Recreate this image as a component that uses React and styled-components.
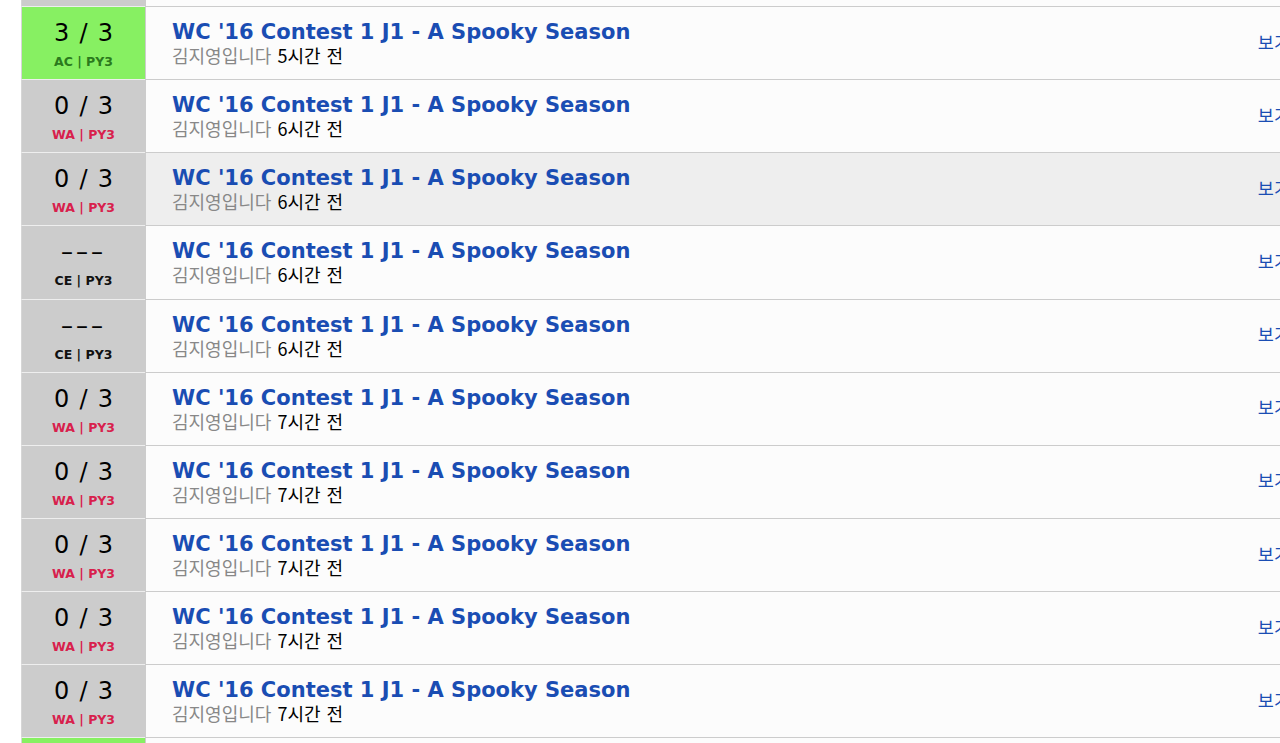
import React from "react";
import styled, { createGlobalStyle } from "styled-components";

const GlobalStyle = createGlobalStyle`
  html, body {
    margin: 0;
    padding: 0;
    background: #ffffff;
    overflow: hidden;
  }
  body {
    font-family: "DejaVu Sans", "Noto Sans CJK KR", sans-serif;
  }
`;

const STATUS = {
  AC: { bg: "#87f062", fg: "#2b7a1d" },
  WA: { bg: "#cccccc", fg: "#d8204c" },
  CE: { bg: "#cccccc", fg: "#111111" },
};

const Page = styled.div`
  padding-left: 21px;
  height: 743px;
  overflow: hidden;
`;

const List = styled.ul`
  list-style: none;
  margin: -66.15px 0 0 0;
  padding: 0;
  width: 1311px;
`;

const Row = styled.li`
  display: flex;
  height: 73.15px;
`;

const Score = styled.div`
  box-sizing: border-box;
  width: 124px;
  flex: none;
  border-left: 1px solid #d6d6d6;
  border-bottom: 1px solid #eeeeee;
  background: ${(p) => STATUS[p.$status].bg};
  display: flex;
  flex-direction: column;
  align-items: center;
  padding-top: 12px;
`;

const Points = styled.div`
  font-family: "DejaVu Sans", sans-serif;
  font-size: 24px;
  line-height: 28px;
  color: #000;
  word-spacing: 2.5px;
  white-space: pre;
  letter-spacing: ${(p) => (p.$dash ? "3px" : "0")};
`;

const State = styled.div`
  font-family: "DejaVu Sans", sans-serif;
  font-weight: 700;
  font-size: 12.5px;
  line-height: 16px;
  margin-top: 7px;
  color: ${(p) => STATUS[p.$status].fg};
`;

const Info = styled.div`
  box-sizing: border-box;
  flex: 1;
  display: flex;
  align-items: center;
  border-left: 1px solid #cccccc;
  border-bottom: 1px solid #cccccc;
  background: ${(p) => (p.$hover ? "#eeeeee" : "#fcfcfc")};
  padding: 0 42px 0 26px;
`;

const Text = styled.div`
  flex: 1;
  align-self: flex-start;
  padding-top: 13px;
`;

const Title = styled.a`
  display: block;
  font-family: "DejaVu Sans", sans-serif;
  font-weight: 700;
  font-size: 21px;
  line-height: 24px;
  color: #1a4db3;
  text-decoration: none;
  white-space: nowrap;
`;

const Meta = styled.div`
  font-family: "Noto Sans CJK KR", sans-serif;
  font-size: 18px;
  line-height: 22px;
  word-spacing: 2px;
  color: #000;
`;

const User = styled.span`
  color: #888888;
`;

const View = styled.a`
  font-family: "Noto Sans CJK KR", sans-serif;
  font-size: 17.5px;
  line-height: 22px;
  margin-bottom: 3px;
  color: #1a4db3;
  text-decoration: none;
  white-space: nowrap;
`;

const rows = [
  { status: "WA", points: "0 / 3", time: "5시간 전" },
  { status: "AC", points: "3 / 3", time: "5시간 전" },
  { status: "WA", points: "0 / 3", time: "6시간 전" },
  { status: "WA", points: "0 / 3", time: "6시간 전", hover: true },
  { status: "CE", points: null, time: "6시간 전" },
  { status: "CE", points: null, time: "6시간 전" },
  { status: "WA", points: "0 / 3", time: "7시간 전" },
  { status: "WA", points: "0 / 3", time: "7시간 전" },
  { status: "WA", points: "0 / 3", time: "7시간 전" },
  { status: "WA", points: "0 / 3", time: "7시간 전" },
  { status: "WA", points: "0 / 3", time: "7시간 전" },
  { status: "AC", points: "3 / 3", time: "8시간 전" },
];

export default function App() {
  return (
    <>
      <GlobalStyle />
      <Page>
        <List>
          {rows.map((r, i) => (
            <Row key={i}>
              <Score $status={r.status}>
                <Points $dash={!r.points}>{r.points || "–––"}</Points>
                <State $status={r.status}>{r.status} | PY3</State>
              </Score>
              <Info $hover={r.hover}>
                <Text>
                  <Title href="#">WC '16 Contest 1 J1 - A Spooky Season</Title>
                  <Meta>
                    <User>김지영입니다</User> {r.time}
                  </Meta>
                </Text>
                <View href="#">보기</View>
              </Info>
            </Row>
          ))}
        </List>
      </Page>
    </>
  );
}
